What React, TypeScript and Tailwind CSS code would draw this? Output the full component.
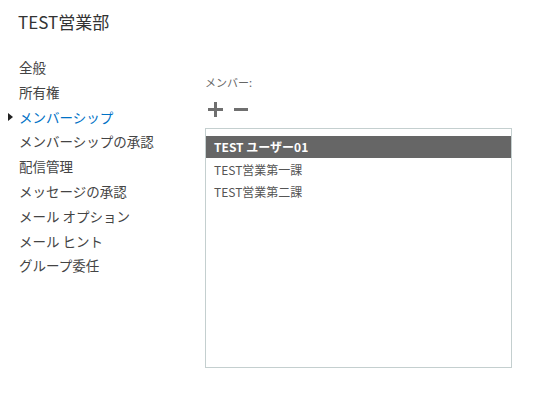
import React from "react";

const font = { fontFamily: '"Noto Sans CJK JP", "Noto Sans", sans-serif' };

const navItems = [
  "全般",
  "所有権",
  "メンバーシップ",
  "メンバーシップの承認",
  "配信管理",
  "メッセージの承認",
  "メール オプション",
  "メール ヒント",
  "グループ委任",
];

export default function App() {
  return (
    <div
      className="w-[548px] h-[402px] bg-white overflow-hidden relative text-[#444]"
      style={font}
    >
      <div className="pl-[18px] pt-[9px] text-[17px] leading-[26px] text-[#333]">TEST営業部</div>
      <div className="flex">
        <div className="w-[205px] pt-[20px]">
          {navItems.map((n) => {
            const active = n === "メンバーシップ";
            return (
              <div
                key={n}
                className={`relative pl-[19px] text-[13.5px] leading-[24.8px] ${
                  active ? "text-[#0072c6]" : "text-[#444]"
                }`}
              >
                {active && (
                  <span className="absolute left-[8px] top-[8px] w-0 h-0 border-t-[4px] border-b-[4px] border-l-[5px] border-t-transparent border-b-transparent border-l-[#222]" />
                )}
                {n}
              </div>
            );
          })}
        </div>
        <div className="flex flex-col">
          <div className="pt-[39px] text-[11px] leading-[16px] text-[#666]">メンバー:</div>
          <div className="flex items-center gap-[11px] pl-[3px] mt-[12px] h-[14px]">
            <svg width="15" height="15" viewBox="0 0 15 15">
              <rect x="0" y="6" width="15" height="3" fill="#6f6f6f" />
              <rect x="6" y="0" width="3" height="15" fill="#6f6f6f" />
            </svg>
            <svg width="14" height="15" viewBox="0 0 14 15">
              <rect x="0" y="6" width="14" height="3" fill="#6f6f6f" />
            </svg>
          </div>
          <div className="mt-[12px] w-[307px] h-[240px] border border-[#c4cfcf] pt-[7px]">
            <div className="h-[22px] bg-[#666666] text-white font-semibold text-[12px] leading-[22px] pl-[8px]">
              TEST ユーザー01
            </div>
            <div className="text-[12px] leading-[22px] pl-[8px] pt-[1px] text-[#555]">TEST営業第一課</div>
            <div className="text-[12px] leading-[22px] pl-[8px] text-[#555]">TEST営業第二課</div>
          </div>
        </div>
      </div>
    </div>
  );
}
